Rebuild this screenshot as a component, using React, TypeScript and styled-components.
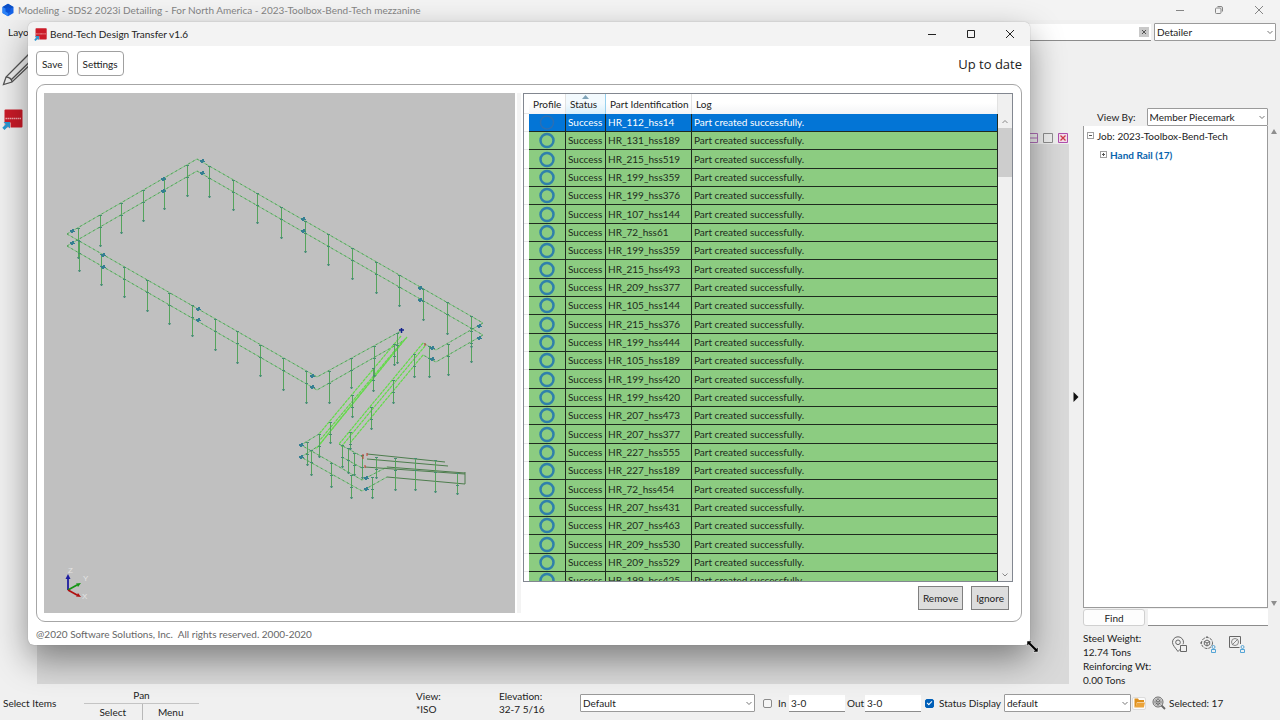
import React from "react";
import styled, { createGlobalStyle, css } from "styled-components";

const GlobalStyle = createGlobalStyle`
  *, *::before, *::after { box-sizing: border-box; }
  body { margin: 0; background: #f0f0f0; }
  body, button, input, select {
    font-family: Lato, "Open Sans", sans-serif;
    font-size: 10px;
    line-height: 14px;
    color: #222;
  }
  button { cursor: pointer; padding: 0; }
`;

/* ---------- host application ---------- */

const Desktop = styled.div`
  position: relative;
  display: flex;
  flex-direction: column;
  min-height: 100vh;
  overflow: hidden;
  background: #f0f0f0;
`;

const HostTitleBar = styled.header`
  display: flex;
  align-items: center;
  gap: 4px;
  height: 20px;
  padding-left: 2px;
  background: #f3f3f3;
  color: #858585;
`;

const HostTitle = styled.h1`
  flex: 1;
  margin: 0;
  font-size: 10px;
  font-weight: 400;
`;

const CaptionButton = styled.button<{ $width: number }>`
  display: flex;
  align-items: center;
  justify-content: center;
  width: ${(p) => p.$width}px;
  height: 100%;
  border: 0;
  background: transparent;
  color: inherit;
`;

const CaptionButtons = styled.div`
  display: flex;
  height: 100%;
`;

const MenuRow = styled.nav`
  display: flex;
  align-items: center;
  gap: 3px;
  height: 23px;
  padding: 1px 4px 0 8px;
`;

const MenuItem = styled.button`
  border: 0;
  background: transparent;
`;

const SearchBox = styled.label`
  display: flex;
  flex: 1;
  align-items: center;
  height: 17px;
  padding-right: 2px;
  border-bottom: 1px solid #8c8c8c;
  background: #fff;
`;

const ClearButton = styled.button`
  display: flex;
  align-items: center;
  justify-content: center;
  width: 10px;
  height: 10px;
  border: 0;
  background: #c9c9c9;
`;

const BareInput = styled.input`
  flex: 1;
  min-width: 0;
  border: 0;
  outline: 0;
  background: transparent;
`;

const SelectFrame = styled.span<{ $width?: number }>`
  position: relative;
  display: block;
  flex: ${(p) => (p.$width ? "none" : "1")};
  width: ${(p) => (p.$width ? `${p.$width}px` : "auto")};
  height: 18px;

  select {
    width: 100%;
    height: 100%;
    padding: 0 14px 0 2px;
    border: 1px solid #9a9a9a;
    border-radius: 1px;
    background: #fff;
    appearance: none;
  }
  svg {
    position: absolute;
    top: 7px;
    right: 2px;
    pointer-events: none;
  }
`;

const Body = styled.div`
  display: flex;
  flex: 1;
`;

const ToolRail = styled.aside`
  display: flex;
  flex-direction: column;
  align-items: flex-start;
  gap: 22px;
  width: 37px;
  padding: 10px 0 0 2px;
`;

const ToolButton = styled.button`
  display: block;
  border: 0;
  background: transparent;
  line-height: 0;
`;

const Workspace = styled.main`
  display: flex;
  flex: 1;
  flex-direction: column;
`;

const MdiBar = styled.div`
  display: flex;
  align-items: flex-end;
  justify-content: flex-end;
  gap: 3px;
  height: 101px;
`;

const MdiCanvas = styled.div`
  flex: 1;
  background: #d9d9d9;
`;

const Expander = styled.button`
  display: flex;
  align-items: center;
  justify-content: center;
  width: 14px;
  padding-top: 66px;
  border: 0;
  background: transparent;
`;

const SidePanel = styled.aside`
  display: flex;
  flex-direction: column;
  width: 197px;
  padding-top: 65px;
`;

const ViewByRow = styled.label`
  display: flex;
  align-items: center;
  gap: 11px;
  padding: 0 12px 0 14px;
`;

const TreeArea = styled.div`
  display: flex;
  flex: 1;
`;

const Tree = styled.ul`
  flex: 1;
  margin: 0;
  padding: 0 0 0 3px;
  border: 1px solid #9a9a9a;
  border-top: 0;
  background: #fff;
  list-style: none;
`;

const TreeItem = styled.li<{ $level: number }>`
  display: flex;
  align-items: center;
  gap: 3px;
  height: 19px;
  padding-left: ${(p) => p.$level * 13}px;
  color: ${(p) => (p.$level ? "#0a64ad" : "#222")};
  font-weight: ${(p) => (p.$level ? 700 : 400)};
`;

const Twisty = styled.button`
  display: block;
  border: 0;
  background: transparent;
  line-height: 0;
`;

const ScrollArrows = styled.div`
  display: flex;
  flex-direction: column;
  align-items: center;
  justify-content: space-between;
  width: 12px;
  padding: 3px 0 2px;
`;

const FindRow = styled.div`
  display: flex;
  gap: 3px;
  height: 18px;
  padding: 1px 12px 0 0;
`;

const FindButton = styled.button`
  width: 62px;
  border: 1px solid #d0d0d0;
  border-radius: 3px;
  background: #fdfdfd;
`;

const LineInput = styled.input<{ $width?: number }>`
  flex: ${(p) => (p.$width ? "none" : "1")};
  width: ${(p) => (p.$width ? `${p.$width}px` : "auto")};
  min-width: 0;
  height: 17px;
  padding: 0 2px;
  border: 0;
  border-bottom: 1px solid #8c8c8c;
  border-radius: 0;
  background: #fff;
`;

const WeightArea = styled.div`
  display: flex;
  align-items: flex-start;
  justify-content: space-between;
  height: 58px;
  padding: 5px 34px 0 0;
`;

const Weights = styled.dl`
  margin: 0;
  dt, dd { margin: 0; line-height: 14px; white-space: nowrap; }
`;

const ViewTools = styled.div`
  display: flex;
  gap: 12px;
  padding-top: 5px;
`;

const StatusBar = styled.footer`
  display: grid;
  grid-template-columns: 81px 115px 1fr 83px 81px 175px 170px 355px;
  align-items: center;
  height: 36px;
  padding: 2px 0 0 3px;
  white-space: nowrap;
`;

const PanGroup = styled.div`
  display: grid;
  grid-template-columns: 1fr 1fr;
  grid-template-rows: 18px 16px;
  text-align: center;
`;

const PanLabel = styled.span`
  grid-column: 1 / 3;
  padding-top: 2px;
  border-bottom: 1px solid #c4c4c4;
`;

const PanButton = styled.button`
  border: 0;
  background: transparent;
  & + & { border-left: 1px solid #b8b8b8; }
`;

const Readout = styled.div`
  line-height: 13px;
`;

const ClipGroup = styled.div`
  display: flex;
  align-items: center;
  gap: 2px;
  padding-left: 8px;
`;

const Tick = styled.input`
  position: relative;
  flex: none;
  width: 9px;
  height: 9px;
  margin: 0 4px 0 0;
  border: 1px solid #8a8a8a;
  border-radius: 2px;
  background: #f6f6f6;
  appearance: none;

  &:checked {
    border-color: #005fb8;
    background: #005fb8;
  }
  &:checked::after {
    content: "";
    position: absolute;
    top: 1px;
    left: 1px;
    width: 5px;
    height: 3px;
    border: solid #fff;
    border-width: 0 0 1px 1px;
    transform: rotate(-45deg);
  }
`;

const FieldLabel = styled.label<{ $width: number }>`
  width: ${(p) => p.$width}px;
`;

const DisplayGroup = styled.div`
  display: flex;
  align-items: center;
  gap: 1px;
`;

const FolderButton = styled.button`
  display: flex;
  align-items: center;
  justify-content: center;
  width: 14px;
  height: 13px;
  border: 1px solid #dcdcdc;
  border-radius: 2px;
  background: #fbfbfb;
`;

const SelectedCount = styled.output`
  display: flex;
  align-items: center;
  gap: 3px;
  padding-left: 5px;
`;

/* ---------- transfer window ---------- */

const TransferWindow = styled.section`
  position: absolute;
  inset: 22px 250px 75px 28px;
  display: flex;
  flex-direction: column;
  border-radius: 6px;
  background: #fff;
  box-shadow: 0 0 1px #777, 0 14px 34px rgba(0, 0, 0, 0.42);
`;

const WindowTitleBar = styled.header`
  display: flex;
  align-items: center;
  gap: 3px;
  height: 24px;
  padding-left: 6px;
  border-radius: 6px 6px 0 0;
  background: #f3f3f3;
`;

const WindowTitle = styled.h2`
  flex: 1;
  margin: 0;
  font-size: 10px;
  font-weight: 400;
`;

const WindowToolbar = styled.div`
  display: flex;
  align-items: center;
  gap: 8px;
  padding: 5px 8px 8px;
`;

const OutlineButton = styled.button`
  height: 25px;
  padding: 0 5px;
  border: 1px solid #a0a0a0;
  border-radius: 4px;
  background: #fff;
`;

const SyncState = styled.p`
  flex: 1;
  margin: 0;
  font-family: "Open Sans", sans-serif;
  font-size: 13px;
  line-height: 18px;
  text-align: right;
`;

const GroupBox = styled.div`
  display: grid;
  flex: 1;
  grid-template-columns: 471fr 4px 490fr;
  grid-template-rows: minmax(0, 1fr);
  gap: 2px;
  min-height: 0;
  margin: 0 8px;
  padding: 8px 8px 8px 7px;
  border: 1px solid #a6a6a6;
  border-radius: 9px;
`;

const ModelView = styled.svg`
  display: block;
  width: 100%;
  height: 100%;
  background: #c0c0c0;
`;

const Splitter = styled.div`
  background: #f3f3f3;
`;

const LogPane = styled.div`
  display: flex;
  flex-direction: column;
  min-height: 0;
`;

const TableFrame = styled.div`
  display: flex;
  flex: 1;
  min-height: 0;
  border: 1px solid #828790;
  overflow: hidden;
`;

const TableClip = styled.div`
  flex: 1;
  height: 100%;
  overflow: hidden;
`;

const LogTable = styled.table`
  width: 100%;
  border-spacing: 0;
  table-layout: fixed;
  white-space: nowrap;
`;

const Gutter = styled.td`
  width: 5px;
  padding: 0;
  border-bottom: 1px solid #e6e6e6;
`;

const HeadCell = styled.th<{ $width?: number; $sorted?: boolean }>`
  position: relative;
  width: ${(p) => (p.$width ? `${p.$width}px` : "auto")};
  height: 20px;
  padding: 0 0 0 4px;
  border-right: 1px solid #e2e2e2;
  background: linear-gradient(#fff 45%, #f3f4f6);
  font-weight: 400;
  text-align: left;

  ${(p) =>
    p.$sorted &&
    css`
      border-right-color: #96d0ee;
      background: linear-gradient(#f3fafe 45%, #d8effb);
    `}

  svg {
    position: absolute;
    top: 1px;
    left: 16px;
  }
`;

const Cell = styled.td`
  height: 18px;
  padding: 0 0 0 2px;
  border-right: 1px solid #1f2a1f;
  border-bottom: 1px solid #1f2a1f;
  line-height: 17px;
  overflow: hidden;
`;

const ProfileCell = styled(Cell)`
  padding: 0;

  svg { display: block; margin: 0 auto; }
`;

const LogRow = styled.tr<{ $selected: boolean }>`
  color: ${(p) => (p.$selected ? "#fff" : "#1c2a1c")};

  &:nth-child(3n) ${Cell} { height: 19px; }
  ${Cell} { background: ${(p) => (p.$selected ? "#0375d6" : "#8ccc81")}; }
`;

const ScrollBar = styled.div`
  display: grid;
  grid-template-rows: 34px 49px 1fr 13px;
  justify-items: center;
  width: 14px;
  background: #f0f0f0;
`;

const ScrollStep = styled.button`
  align-self: end;
  height: 12px;
  border: 0;
  background: transparent;
  line-height: 0;
`;

const ScrollThumb = styled.div`
  width: 14px;
  background: #cdcdcd;
`;

const ActionRow = styled.div`
  display: flex;
  justify-content: flex-end;
  gap: 8px;
  padding: 4px 4px 3px 0;
`;

const FlatButton = styled.button`
  height: 24px;
  padding: 0 4px;
  border: 1px solid #808080;
  background: #dddddd;
`;

const Copyright = styled.footer`
  padding: 5px 8px 4px;
  color: #666;
  line-height: 14px;
  white-space: pre;
`;

const ResizeCursor = styled.svg`
  position: absolute;
  right: -9px;
  bottom: -8px;
`;

/* ---------- icons ---------- */

const Chevron = () => (
  <svg width="8" height="5" viewBox="0 0 8 5" fill="none" stroke="#777" aria-hidden>
    <path d="M1.500 1 4 3.500 6.500 1" />
  </svg>
);

const AppLogo = () => (
  <svg width="12" height="14" viewBox="0 0 12 14" aria-hidden>
    <path d="M6 .8 11.500 4v6L6 13.200 .5 10V4z" fill="#1664e8" />
    <path d="M6 .8 11.500 4 6 7 .5 4z" fill="#0c4fc4" />
    <path d="M6 7v6.200L.5 10V4z" fill="#2d83f7" />
    <path d="M6 4 8.500 5.500v3L6 10 3.500 8.500v-3z" fill="#0d55d8" />
  </svg>
);

const BendTechIcon = ({ size }: { size: number }) => (
  <svg width={size} height={size} viewBox="0 0 21 21" aria-hidden>
    <rect x="2.500" y=".5" width="18" height="18" rx="1" fill="#cb1b28" />
    <path d="M3.500 9.500h16" stroke="#f0a9ad" strokeWidth="1.600" strokeDasharray="1.500 .5" />
    <path d="M0 13.500h9v7.500H0z" fill="#f0f0f0" opacity=".55" />
    <path d="M1.500 13h6.500v6.500l-2-2L2.500 21 .3 18.800l3.500-3.500z" fill="#2b98d2" />
  </svg>
);

const PencilIcon = () => (
  <svg width="34" height="34" viewBox="0 0 34 34" fill="none" stroke="#555" strokeWidth="1.300" aria-hidden>
    <path d="M1.500 31.500 4 24 26 2l6 6L10 29z" />
    <path d="M4 24c3 0 6 2 6 5M9 27 30.500 6" />
  </svg>
);

const MinimizeIcon = () => (
  <svg width="10" height="10" viewBox="0 0 10 10" stroke="currentColor" aria-hidden>
    <path d="M1 5.500h8" />
  </svg>
);
const MaximizeIcon = () => (
  <svg width="10" height="10" viewBox="0 0 10 10" fill="none" stroke="currentColor" aria-hidden>
    <path d="M1.500 1.500h7v7h-7z" />
  </svg>
);
const RestoreIcon = () => (
  <svg width="10" height="10" viewBox="0 0 10 10" fill="none" stroke="currentColor" aria-hidden>
    <rect x="1.500" y="3" width="5.500" height="5.500" rx="1" />
    <path d="M3.500 1.500H7a1.500 1.500 0 0 1 1.500 1.500v3.500" />
  </svg>
);
const CloseIcon = () => (
  <svg width="10" height="10" viewBox="0 0 10 10" stroke="currentColor" aria-hidden>
    <path d="m1 1 8 8M9 1 1 9" />
  </svg>
);

const MdiIcons = () => (
  <>
    <svg width="12" height="12" viewBox="0 0 12 12" fill="none" aria-hidden>
      <path d="M1.500 1.500h9v9h-9zM1.500 6h9" stroke="#b06fb8" />
    </svg>
    <svg width="12" height="12" viewBox="0 0 12 12" fill="none" aria-hidden>
      <path d="M1.500 1.500h9v9h-9z" stroke="#8e8e8e" />
    </svg>
    <svg width="12" height="12" viewBox="0 0 12 12" fill="none" aria-hidden>
      <path d="M1.500 1.500h9v9h-9z" stroke="#b04fae" fill="#f3dcea" />
      <path d="m3.500 3.500 5 5m0-5-5 5" stroke="#cf3a48" strokeWidth="1.300" />
    </svg>
  </>
);

const TwistyIcon = ({ open }: { open: boolean }) => (
  <svg width="7" height="7" viewBox="0 0 7 7" fill="none" stroke="#a0a0a0" aria-hidden>
    <rect x=".5" y=".5" width="6" height="6" />
    <path d={open ? "M2 3.500h3" : "M2 3.500h3M3.500 2v3"} stroke="#555" />
  </svg>
);

const Triangle = ({ down }: { down?: boolean }) => (
  <svg width="6" height="5" viewBox="0 0 6 5" aria-hidden>
    <path d={down ? "M0 0h6L3 5z" : "M0 5h6L3 0z"} fill="#8e8e8e" />
  </svg>
);

const PinIcon = () => (
  <svg width="17" height="17" viewBox="0 0 17 17" fill="none" stroke="#666" aria-hidden>
    <path d="M7 15.500C4 11.500 1.500 9 1.500 6.300a5.500 5.500 0 0 1 11 0c0 .8-.2 1.400-.5 2" />
    <circle cx="7" cy="6.300" r="2.300" />
    <path d="M9.500 9.500h6v6h-6zM7 15.500l2.500-2.500" />
  </svg>
);

const PersonBadge = () => (
  <g stroke="#55a5d6">
    <circle cx="13.500" cy="11" r="1.500" />
    <path d="M11.500 13.500h4v3h-4z" />
  </g>
);

const OrbitIcon = () => (
  <svg width="17" height="17" viewBox="0 0 17 17" fill="none" stroke="#666" aria-hidden>
    <circle cx="7" cy="7" r="5.500" strokeDasharray="3 1" />
    <path d="M7 4l2.700 1.500v3L7 10 4.300 8.500v-3zM7 7v3M4.300 5.500 7 7l2.700-1.500M7 0v2M0 7h2" />
    <PersonBadge />
  </svg>
);

const FrameIcon = () => (
  <svg width="17" height="17" viewBox="0 0 17 17" fill="none" stroke="#666" aria-hidden>
    <path d="M11.500 8V.5h-11v11h10" />
    <circle cx="6" cy="6" r="3.500" stroke="#888" />
    <path d="m3 9 6-6" stroke="#888" />
    <PersonBadge />
  </svg>
);

const FolderIcon = () => (
  <svg width="11" height="10" viewBox="0 0 11 10" aria-hidden>
    <path d="M.5 9.500v-9h3.500l1 1.500h5v2H3L1.500 9.500z" fill="#dd8f1c" />
    <path d="M2.800 4.600H11L9.800 9.500H1.500z" fill="#eba43b" />
  </svg>
);

const InspectIcon = () => (
  <svg width="14" height="14" viewBox="0 0 14 14" fill="none" stroke="#666" aria-hidden>
    <circle cx="6" cy="6" r="5" />
    <circle cx="6" cy="6" r="3.500" stroke="#999" />
    <path d="M6 3.500 8 4.700v2.500L6 8.500 4 7.200V4.700zM6 6v2.500M4 4.700 6 6l2-1.300" />
    <path d="m9.500 9.500 3.500 3.500" strokeWidth="1.800" />
  </svg>
);

const ProfileRing = ({ selected }: { selected: boolean }) => (
  <svg width="16" height="17" viewBox="0 0 16 17" fill="none" aria-hidden>
    <circle cx="8" cy="8.500" r="6.500" stroke={selected ? "#2a6fb4" : "#2f80ab"} strokeWidth={selected ? 1.5 : 2.500} />
  </svg>
);

/* ---------- model drawing ---------- */

const rails: string[] = [
  "M67 234 197 159 483 323 436 350 423 343",
  "M67 246 197 171 483 335 436 362 423 355",
  "M67 234 317 377 401 331",
  "M67 246 317 390 403 341",
  "M319 434 301 445 362 480 387 467",
  "M320 445 301 457 362 491 387 477",
  "M339 444 363 457M342 457 362 468",
];

const stringers: string[] = [
  "M401 336 319 434",
  "M402 342 320 440",
  "M405 339 320 444",
  "M407 337 316 449",
  "M423 343 339 444",
  "M425 346 341 447",
  "M423 355 350 443",
];

const ramp: string[] = [
  "M367 454 445 462",
  "M367 459 448 466",
  "M365 467 465 474M465 472v12",
  "M387 467 465 473",
  "M387 477 465 484",
];

// x, top, bottom of each post
const posts: [number, number, number][] = [
  [187, 165, 196], [164, 178, 209], [143, 190, 221], [121, 203, 233], [100, 215, 246], [78, 228, 258],
  [209, 166, 197], [233, 180, 210], [257, 193, 223], [281, 207, 238], [305, 221, 252], [328, 234, 265],
  [352, 248, 279], [376, 262, 293], [399, 275, 306], [423, 289, 320], [447, 302, 334], [471, 316, 347],
  [79, 241, 271], [101, 254, 285], [124, 267, 297], [147, 280, 311], [169, 293, 324], [192, 305, 336],
  [215, 319, 350], [237, 331, 363], [260, 345, 376], [283, 358, 390], [306, 371, 403], [329, 371, 403],
  [351, 358, 388], [374, 346, 376], [397, 333, 363], [394, 344, 365],
  [471, 331, 362], [448, 344, 375], [429, 346, 377],
  [373, 368, 391], [352, 395, 417], [330, 422, 443], [319, 434, 457], [307, 442, 465], [311, 450, 475],
  [331, 463, 487], [351, 475, 498], [372, 477, 498], [414, 354, 377], [393, 380, 403], [371, 407, 429],
  [350, 432, 449], [342, 445, 467], [348, 448, 473], [354, 453, 475], [362, 455, 478],
  [376, 457, 478], [395, 458, 490], [415, 458, 490], [435, 460, 492], [457, 473, 494],
];

const joints: [number, number][] = [
  [72, 231], [72, 243], [163, 179], [163, 191], [202, 161], [202, 173], [103, 255], [103, 267],
  [198, 309], [198, 320], [303, 219], [303, 231], [420, 288], [420, 300], [479, 326], [479, 338],
  [312, 376], [312, 387], [432, 348], [432, 359], [301, 445], [301, 457], [366, 478], [366, 489],
];

const ModelDrawing = () => (
  <ModelView viewBox="44 93 471 520" preserveAspectRatio="xMidYMid slice" role="img" aria-label="Hand rail model">
    <g fill="none" stroke="#5cb565" strokeWidth="1">
      {rails.map((d) => <path key={d} d={d} stroke="#84c388" />)}
      {rails.map((d) => <path key={d + "dash"} d={d} stroke="#559f5c" strokeDasharray="2 3" />)}
      {stringers.map((d) => <path key={d} d={d} stroke="#9ad290" />)}
      {stringers.map((d) => <path key={d + "dash"} d={d} stroke="#66d94c" strokeWidth="1.200" strokeDasharray="3 1" />)}
      {ramp.map((d) => <path key={d} d={d} stroke="#4d7d4d" />)}
      {posts.map(([x, top, bottom], i) => (
        <path key={i} d={`M${x + 0.5} ${top}V${bottom}`} stroke="#55a45c" />
      ))}
    </g>
    <g fill="#468c74">
      {posts.map(([x, top, bottom], i) => (
        <path key={i} d={`M${x - 1} ${top}h3v1h-3zM${x - 1} ${top + 12}h3v1h-3zM${x - 1} ${bottom - 1}h3l-1 2h-1z`} />
      ))}
    </g>
    <g fill="#347f92">
      {joints.map(([x, y], i) => <path key={i} d={`M${x - 2} ${y - 1}h2v-1h2v2h1v1h-2v1h-2v-1h-1z`} />)}
    </g>
    <path d="M399 330h5M401.500 328v5" stroke="#12208c" strokeWidth="1.500" />
    <path d="M363 454v5M367 453v3M365 465v3M425 343v3" stroke="#c93a2e" />
    <g strokeWidth="1.800" fill="none">
      <path d="M68 590v-11" stroke="#1d1da0" />
      <path d="M68 590l9-5" stroke="#149414" />
      <path d="M68 590l9 5" stroke="#b01010" />
    </g>
    <path d="M68 574l2.500 5h-5z" fill="#1d1da0" />
    <path d="M81 583l-3 4-2-3.500z" fill="#149414" />
    <path d="M81 597l-5-.5 2-3.500z" fill="#b01010" />
    <g fill="#e4e4e4" fontSize="8" fontFamily="Liberation Sans, sans-serif">
      <text x="68" y="573">Z</text>
      <text x="83" y="581">Y</text>
      <text x="82" y="599">X</text>
    </g>
  </ModelView>
);

/* ---------- data ---------- */

const parts = [
  "HR_112_hss14", "HR_131_hss189", "HR_215_hss519", "HR_199_hss359", "HR_199_hss376", "HR_107_hss144",
  "HR_72_hss61", "HR_199_hss359", "HR_215_hss493", "HR_209_hss377", "HR_105_hss144", "HR_215_hss376",
  "HR_199_hss444", "HR_105_hss189", "HR_199_hss420", "HR_199_hss420", "HR_207_hss473", "HR_207_hss377",
  "HR_227_hss555", "HR_227_hss189", "HR_72_hss454", "HR_207_hss431", "HR_207_hss463", "HR_209_hss530",
  "HR_209_hss529", "HR_199_hss425",
];

const Dropdown = ({ id, label, value, width }: { id: string; label?: string; value: string; width?: number }) => (
  <SelectFrame $width={width}>
    <select id={id} aria-label={label} defaultValue={value}>
      <option>{value}</option>
    </select>
    <Chevron />
  </SelectFrame>
);

const Transfer = () => (
  <TransferWindow aria-label="Bend-Tech Design Transfer">
    <WindowTitleBar>
      <BendTechIcon size={13} />
      <WindowTitle>Bend-Tech Design Transfer v1.6</WindowTitle>
      <CaptionButtons>
        <CaptionButton $width={38} aria-label="Minimize"><MinimizeIcon /></CaptionButton>
        <CaptionButton $width={39} aria-label="Maximize"><MaximizeIcon /></CaptionButton>
        <CaptionButton $width={40} aria-label="Close"><CloseIcon /></CaptionButton>
      </CaptionButtons>
    </WindowTitleBar>
    <WindowToolbar>
      <OutlineButton>Save</OutlineButton>
      <OutlineButton>Settings</OutlineButton>
      <SyncState>Up to date</SyncState>
    </WindowToolbar>
    <GroupBox>
      <ModelDrawing />
      <Splitter />
      <LogPane>
        <TableFrame>
          <TableClip>
            <LogTable>
              <thead>
                <tr>
                  <Gutter />
                  <HeadCell $width={37}>Profile</HeadCell>
                  <HeadCell $width={40} $sorted>
                    <svg width="7" height="4" viewBox="0 0 7 4" aria-hidden>
                      <path d="M0 4h7L3.500 0z" fill="#7fa3b8" />
                    </svg>
                    Status
                  </HeadCell>
                  <HeadCell $width={86}>Part Identification</HeadCell>
                  <HeadCell>Log</HeadCell>
                </tr>
              </thead>
              <tbody>
                {parts.map((part, i) => (
                  <LogRow key={i} $selected={i === 0}>
                    <Gutter />
                    <ProfileCell><ProfileRing selected={i === 0} /></ProfileCell>
                    <Cell>Success</Cell>
                    <Cell>{part}</Cell>
                    <Cell>Part created successfully.</Cell>
                  </LogRow>
                ))}
              </tbody>
            </LogTable>
          </TableClip>
          <ScrollBar>
            <ScrollStep aria-label="Scroll up">
              <svg width="8" height="12" viewBox="0 0 8 12" fill="none" stroke="#888" aria-hidden>
                <path d="M1.500 7 4 4.500 6.500 7" />
              </svg>
            </ScrollStep>
            <ScrollThumb />
            <span />
            <ScrollStep aria-label="Scroll down">
              <svg width="8" height="12" viewBox="0 0 8 12" fill="none" stroke="#888" aria-hidden>
                <path d="M1.500 4.500 4 7l2.500-2.500" />
              </svg>
            </ScrollStep>
          </ScrollBar>
        </TableFrame>
        <ActionRow>
          <FlatButton>Remove</FlatButton>
          <FlatButton>Ignore</FlatButton>
        </ActionRow>
      </LogPane>
    </GroupBox>
    <Copyright>{"@2020 Software Solutions, Inc.  All rights reserved. 2000-2020"}</Copyright>
    <ResizeCursor width="13" height="13" viewBox="0 0 13 13" aria-hidden>
      <path d="M1 1h5L4.600 2.800l5.800 5.800L12 7v5H7l1.600-1.600L2.800 4.600 1 6z" fill="#000" stroke="#fff" strokeWidth=".5" />
    </ResizeCursor>
  </TransferWindow>
);

export default function App() {
  return (
    <Desktop>
      <GlobalStyle />
      <HostTitleBar>
        <AppLogo />
        <HostTitle>Modeling - SDS2 2023i Detailing - For North America - 2023-Toolbox-Bend-Tech mezzanine</HostTitle>
        <CaptionButtons>
          <CaptionButton $width={40} aria-label="Minimize"><MinimizeIcon /></CaptionButton>
          <CaptionButton $width={38} aria-label="Restore"><RestoreIcon /></CaptionButton>
          <CaptionButton $width={42} aria-label="Close"><CloseIcon /></CaptionButton>
        </CaptionButtons>
      </HostTitleBar>
      <MenuRow>
        <MenuItem>Layout</MenuItem>
        <SearchBox>
          <BareInput type="text" aria-label="Search" />
          <ClearButton aria-label="Clear">
            <svg width="6" height="6" viewBox="0 0 6 6" stroke="#555" aria-hidden>
              <path d="m1 1 4 4m0-4-4 4" />
            </svg>
          </ClearButton>
        </SearchBox>
        <Dropdown id="role" label="Role" value="Detailer" width={122} />
      </MenuRow>
      <Body>
        <ToolRail>
          <ToolButton aria-label="Draw"><PencilIcon /></ToolButton>
          <ToolButton aria-label="Bend-Tech"><BendTechIcon size={21} /></ToolButton>
        </ToolRail>
        <Workspace>
          <MdiBar><MdiIcons /></MdiBar>
          <MdiCanvas />
        </Workspace>
        <Expander aria-label="Expand panel">
          <svg width="6" height="10" viewBox="0 0 6 10" aria-hidden><path d="M.5 0 5.500 5l-5 5z" fill="#111" /></svg>
        </Expander>
        <SidePanel>
          <ViewByRow htmlFor="view-by">
            View By:
            <Dropdown id="view-by" value="Member Piecemark" />
          </ViewByRow>
          <TreeArea>
            <Tree>
              <TreeItem $level={0}>
                <Twisty aria-label="Collapse"><TwistyIcon open /></Twisty>Job: 2023-Toolbox-Bend-Tech
              </TreeItem>
              <TreeItem $level={1}>
                <Twisty aria-label="Expand"><TwistyIcon open={false} /></Twisty>Hand Rail (17)
              </TreeItem>
            </Tree>
            <ScrollArrows><Triangle /><Triangle down /></ScrollArrows>
          </TreeArea>
          <FindRow>
            <FindButton>Find</FindButton>
            <LineInput type="text" aria-label="Find text" />
          </FindRow>
          <WeightArea>
            <Weights>
              <dt>Steel Weight:</dt><dd>12.74 Tons</dd>
              <dt>Reinforcing Wt:</dt><dd>0.00 Tons</dd>
            </Weights>
            <ViewTools>
              <ToolButton aria-label="Locate"><PinIcon /></ToolButton>
              <ToolButton aria-label="Orbit"><OrbitIcon /></ToolButton>
              <ToolButton aria-label="Frame"><FrameIcon /></ToolButton>
            </ViewTools>
          </WeightArea>
        </SidePanel>
      </Body>
      <StatusBar>
        <span>Select Items</span>
        <PanGroup>
          <PanLabel>Pan</PanLabel>
          <PanButton>Select</PanButton>
          <PanButton>Menu</PanButton>
        </PanGroup>
        <span />
        <Readout>View:<br />*ISO</Readout>
        <Readout>Elevation:<br />32-7 5/16</Readout>
        <Dropdown id="clip" label="Clip preset" value="Default" width={175} />
        <ClipGroup>
          <Tick type="checkbox" aria-label="Clip depth" />
          <FieldLabel $width={9} htmlFor="in">In</FieldLabel>
          <LineInput id="in" $width={56} defaultValue="3-0" />
          <FieldLabel $width={16} htmlFor="out">Out</FieldLabel>
          <LineInput id="out" $width={56} defaultValue="3-0" />
        </ClipGroup>
        <DisplayGroup>
          <Tick type="checkbox" id="status" defaultChecked />
          <FieldLabel $width={64} htmlFor="status">Status Display</FieldLabel>
          <Dropdown id="display" label="Status display" value="default" width={127} />
          <FolderButton aria-label="Open"><FolderIcon /></FolderButton>
          <SelectedCount><InspectIcon />Selected: 17</SelectedCount>
        </DisplayGroup>
      </StatusBar>
      <Transfer />
    </Desktop>
  );
}
